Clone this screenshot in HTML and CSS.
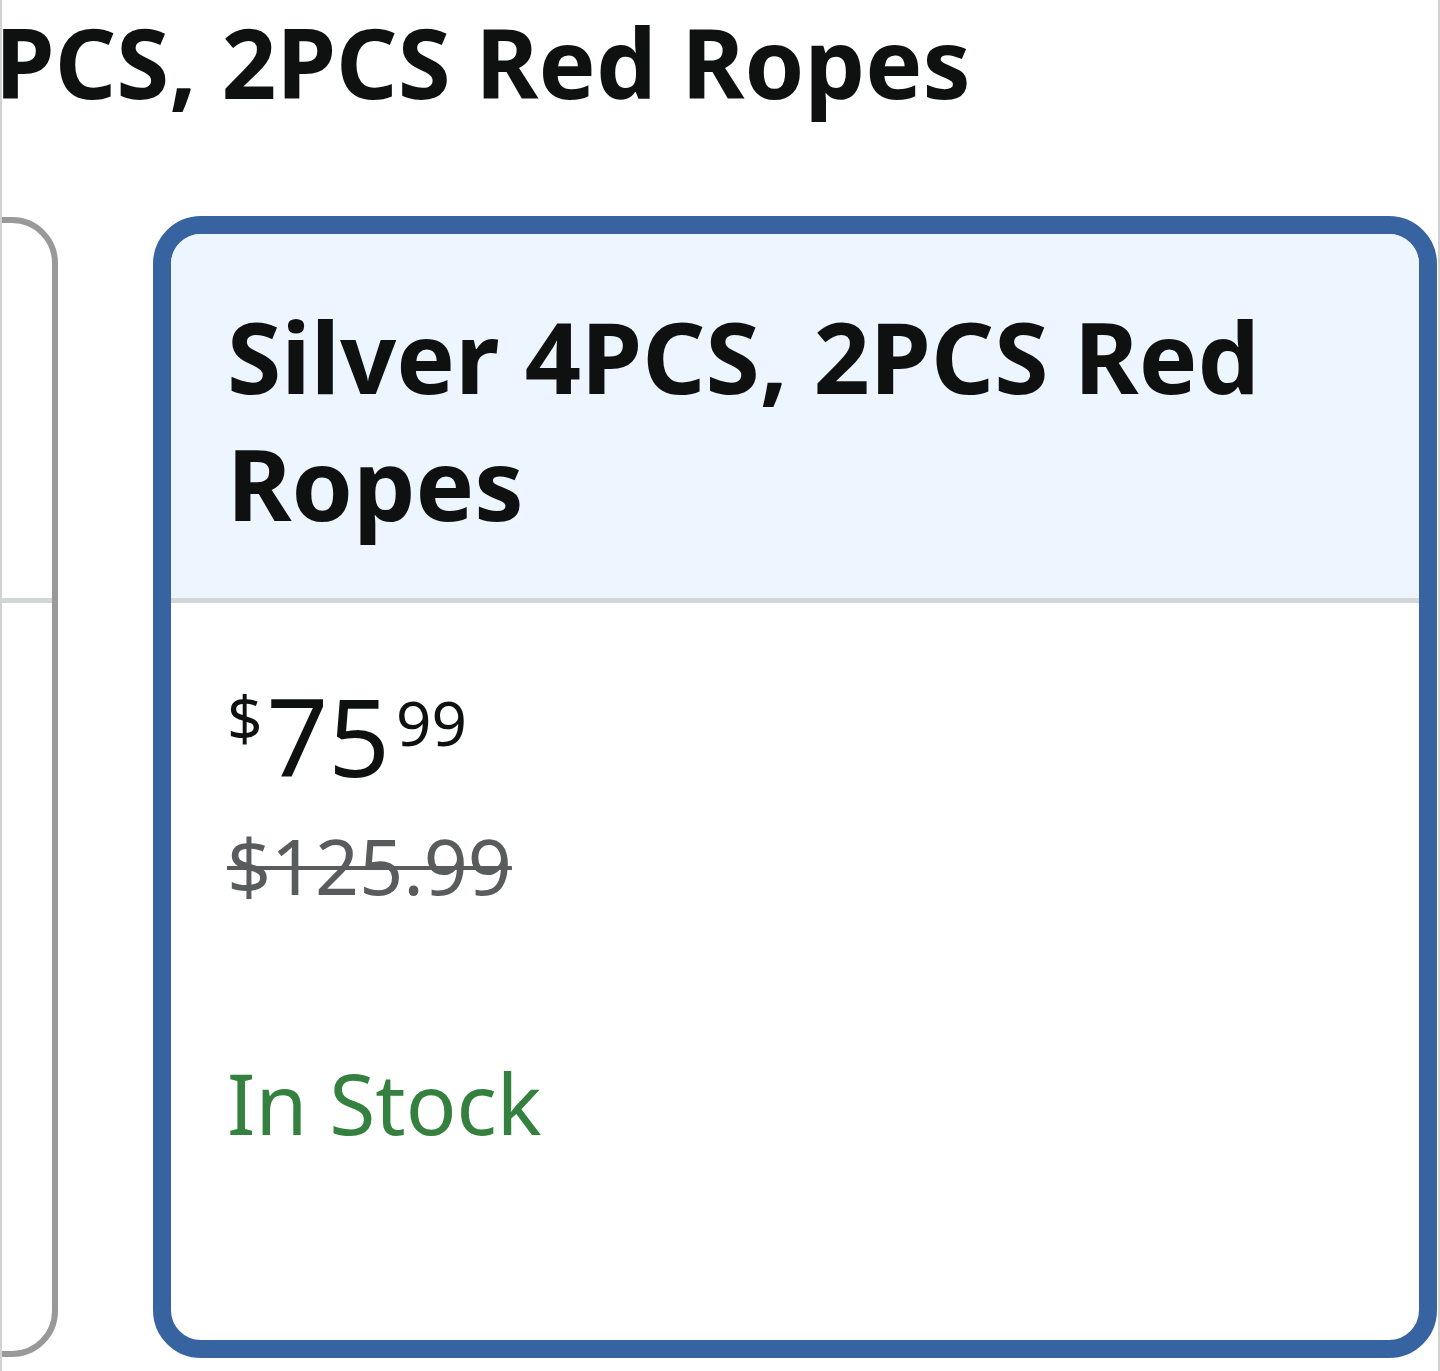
FILE: index.html
```html
<!DOCTYPE html>
<html lang="en">
<head>
<meta charset="utf-8">
<title>Swatches</title>
<link rel="stylesheet" href="styles.css">
</head>
<body>
<div class="frame">
  <h1 class="heading">Silver 4PCS, 2PCS Red Ropes</h1>
  <div class="swatches">
    <div class="swatch">
      <div class="swatch-head"></div>
      <div class="swatch-body"></div>
    </div>
    <div class="swatch swatch-selected">
      <div class="swatch-head">
        <div class="swatch-title">Silver 4PCS, 2PCS Red Ropes</div>
      </div>
      <div class="swatch-body">
        <div class="price">
          <span class="price-symbol">$</span><span class="price-whole">75</span><span class="price-fraction">99</span>
        </div>
        <div class="price-list">$125.99</div>
        <div class="stock">In Stock</div>
      </div>
    </div>
  </div>
</div>
</body>
</html>
```
FILE: styles.css
```css
html, body {
  margin: 0;
  padding: 0;
  background: #ffffff;
}

body {
  font-family: "Noto Sans", "Open Sans", sans-serif;
  color: #0f1111;
}

.frame {
  box-sizing: border-box;
  width: 1440px;
  height: 1371px;
  border-left: 2px solid #d2d2d2;
  border-right: 2px solid #d2d2d2;
  overflow: hidden;
}

.heading {
  margin: 12px 0 0 -352px;
  font-size: 96px;
  line-height: 100px;
  font-weight: 700;
  white-space: nowrap;
}

.swatches {
  display: flex;
  align-items: flex-start;
  gap: 95px;
  margin-top: 105px;
}

.swatch {
  box-sizing: border-box;
  flex: none;
  width: 500px;
  height: 1140px;
  margin-left: -444px;
  border: 6px solid #999999;
  border-radius: 46px;
  overflow: hidden;
  display: flex;
  flex-direction: column;
}

.swatch .swatch-head {
  flex: none;
  height: 375px;
  border-bottom: 5px solid #d3d6d6;
}

.swatch-selected {
  width: 1284px;
  height: 1142px;
  margin-left: 0;
  margin-top: -1px;
  border: 18px solid #3763a0;
  border-radius: 48px;
}

.swatch-selected .swatch-head {
  box-sizing: border-box;
  height: 369px;
  background: #edf5fe;
  padding: 59px 40px 0 56px;
}

.swatch-title {
  font-size: 98.5px;
  line-height: 127px;
  font-weight: 700;
  color: #0f1111;
}

.swatch-selected .swatch-body {
  padding: 79px 40px 0 56px;
}

.price {
  display: flex;
  align-items: flex-start;
}

.price-symbol {
  font-size: 62px;
  line-height: 62px;
  margin-top: 4px;
  margin-right: 4px;
}

.price-whole {
  font-size: 108px;
  line-height: 108px;
}

.price-fraction {
  font-size: 62px;
  line-height: 62px;
  margin-top: 9px;
  margin-left: 6px;
}

.price-list {
  margin-top: 37px;
  font-size: 77px;
  line-height: 77px;
  color: #595c5c;
  text-decoration: line-through;
  text-decoration-thickness: 4px;
}

.stock {
  margin-top: 157px;
  font-size: 84px;
  line-height: 84px;
  color: #34803e;
}
```
